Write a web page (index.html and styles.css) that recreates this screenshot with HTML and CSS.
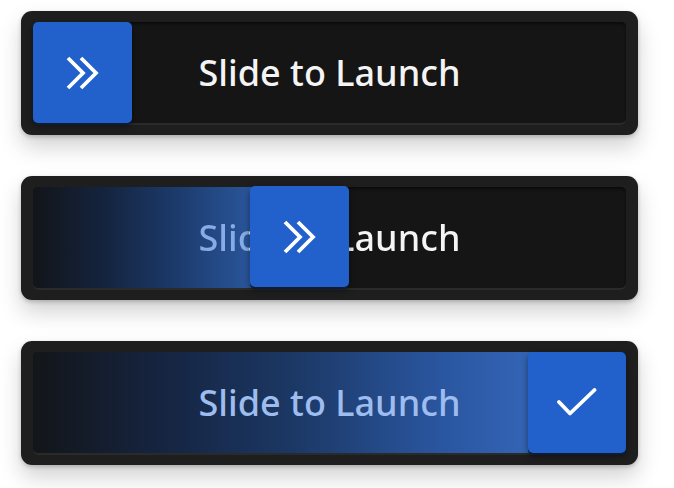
FILE: index.html
```html
<!DOCTYPE html>
<html>
<head>
<meta charset="utf-8">
<link rel="stylesheet" href="styles.css">
</head>
<body>
<div class="page">
  <div class="slider">
    <div class="track">
      <span class="label">Slide to Launch</span>
      <div class="knob knob-start">
        <svg width="36" height="34" viewBox="0 0 36 34"><path d="M3 2 L18 17 L3 32 M16 2 L31 17 L16 32" fill="none" stroke="#fff" stroke-width="3.8" stroke-linejoin="miter"/></svg>
      </div>
    </div>
  </div>
  <div class="slider">
    <div class="track">
      <div class="fill fill-half"></div>
      <span class="label label-half">Slide to Launch</span>
      <div class="knob knob-mid">
        <svg width="36" height="34" viewBox="0 0 36 34"><path d="M3 2 L18 17 L3 32 M16 2 L31 17 L16 32" fill="none" stroke="#fff" stroke-width="3.8" stroke-linejoin="miter"/></svg>
      </div>
    </div>
  </div>
  <div class="slider">
    <div class="track">
      <div class="fill fill-full"></div>
      <span class="label label-full">Slide to Launch</span>
      <div class="knob knob-end">
        <svg width="40" height="29" viewBox="0 0 40 29"><path d="M2 14 L13 25.5 L37.5 2" fill="none" stroke="#fff" stroke-width="3.8" stroke-linecap="round" stroke-linejoin="round"/></svg>
      </div>
    </div>
  </div>
</div>
</body>
</html>
```
FILE: styles.css
```css
html, body {
  margin: 0;
  padding: 0;
  background: #ffffff;
}
.page {
  display: flex;
  flex-direction: column;
  gap: 41px;
  padding: 11px 0 30px 21px;
  min-height: 488px;
  box-sizing: border-box;
}
.slider {
  width: 617px;
  height: 124px;
  box-sizing: border-box;
  padding: 11px 12px 10px 12px;
  background: #1e1e1e;
  border-radius: 11px;
  box-shadow: 0 12px 22px rgba(0, 0, 0, 0.18), 0 2px 4px rgba(0, 0, 0, 0.2);
}
.track {
  position: relative;
  height: 100%;
  background: #151515;
  border-radius: 5px;
  box-shadow: inset 0 -2px 0 #2a2a2a, inset 0 2px 3px rgba(0, 0, 0, 0.5);
  display: flex;
  align-items: center;
  justify-content: center;
}
.fill {
  position: absolute;
  left: 0;
  top: 0;
  bottom: 2px;
  border-radius: 5px 0 0 5px;
}
.fill-half {
  width: 230px;
  background: linear-gradient(90deg, #121519 0%, #14233d 30%, #1c3a6b 62%, #2c5aa3 100%);
}
.fill-full {
  width: 510px;
  background: linear-gradient(90deg, #131619 0%, #152440 25%, #1b3763 50%, #2a56a0 80%, #3566b8 100%);
}
.label {
  position: relative;
  font-family: "Noto Sans", "Lato", sans-serif;
  font-weight: 500;
  font-size: 36px;
  line-height: 1;
  color: #f4f4f4;
  letter-spacing: 0;
  margin-bottom: 2px;
}
.label-half {
  color: transparent;
  background: linear-gradient(90deg, #86abe6 0, #86abe6 50px, #f4f4f4 50px);
  -webkit-background-clip: text;
  background-clip: text;
}
.label-full {
  color: #9ebdee;
}
.knob {
  position: absolute;
  top: 0;
  width: 99px;
  height: 101px;
  background: #2261cb;
  border-radius: 5px;
  box-shadow: 0 2px 0 #0e1b34, 0 3px 6px rgba(0, 0, 0, 0.45);
  display: flex;
  align-items: center;
  justify-content: center;
}
.knob-start { left: 0; }
.knob-mid { left: 217px; top: -1px; }
.knob-end { right: 0; width: 98px; }
```
